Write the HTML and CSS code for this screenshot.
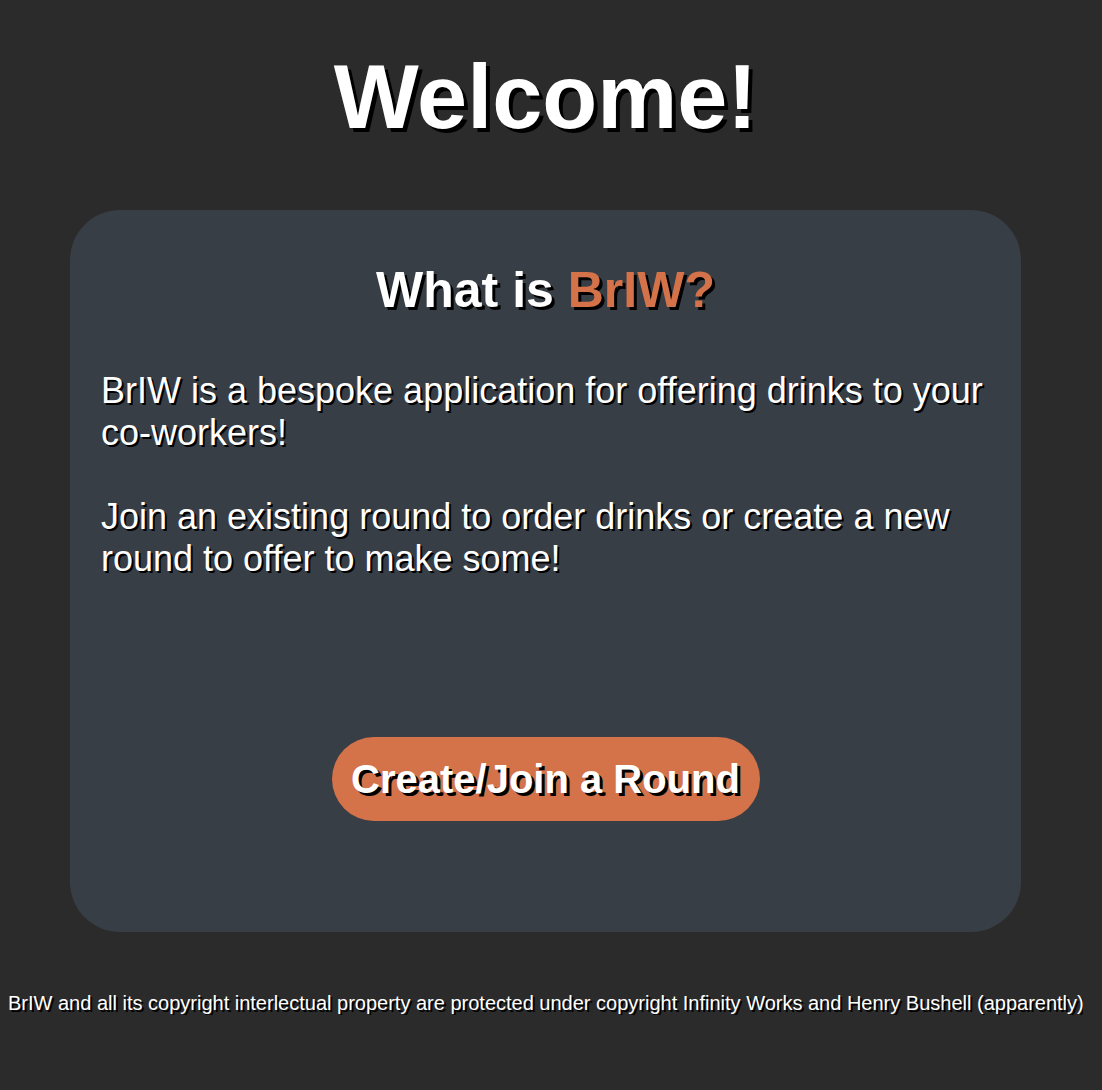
FILE: index.html
```html
<!DOCTYPE html>
<html lang="en">
<head>
<meta charset="utf-8">
<title>BrIW</title>
<link rel="stylesheet" href="styles.css">
</head>
<body>
  <h1 class="title">Welcome!</h1>
  <main class="card">
    <h2 class="card-title">What is <span class="brand">BrIW?</span></h2>
    <p class="card-text">BrIW is a bespoke application for offering drinks to your co-workers!</p>
    <p class="card-text">Join an existing round to order drinks or create a new round to offer to make some!</p>
    <div class="actions">
      <a class="btn" href="#">Create/Join a Round</a>
    </div>
  </main>
  <footer class="footer">BrIW and all its copyright interlectual property are protected under copyright Infinity Works and Henry Bushell (apparently)</footer>
</body>
</html>
```
FILE: styles.css
```css
html, body {
  background: #2b2b2b;
}
body {
  margin: 8px 19px 8px 8px;
  font-family: "Liberation Sans", Arial, sans-serif;
  color: #ffffff;
}
.title {
  margin: 38px 0 0;
  text-align: center;
  font-size: 90px;
  line-height: 1.15;
  font-weight: bold;
  text-shadow: 4px 4px 0 #000;
}
.card {
  margin: 60px auto 0;
  width: 951px;
  height: 722px;
  box-sizing: border-box;
  background: #383e45;
  border-radius: 50px;
  padding: 52px 31px 0;
  display: flex;
  flex-direction: column;
}
.card-title {
  margin: 0 0 51px;
  text-align: center;
  font-size: 50px;
  line-height: 1.15;
  font-weight: bold;
  text-shadow: 3px 3px 0 #000;
}
.brand {
  color: #d4734a;
}
.card-text {
  margin: 0 0 42px;
  font-size: 36px;
  line-height: 42px;
  text-shadow: 2px 2px 0 #000;
}
.actions {
  display: flex;
  justify-content: center;
  margin-top: 115px;
}
.btn {
  display: inline-flex;
  align-items: center;
  justify-content: center;
  width: 428px;
  height: 84px;
  border-radius: 42px;
  background: #d4734a;
  color: #fff;
  text-decoration: none;
  font-size: 40px;
  font-weight: bold;
  text-shadow: 3px 3px 0 #000;
}
.footer {
  margin-top: 60px;
  text-align: center;
  white-space: nowrap;
  font-size: 20px;
  text-shadow: 2px 2px 0 #000;
}
```
